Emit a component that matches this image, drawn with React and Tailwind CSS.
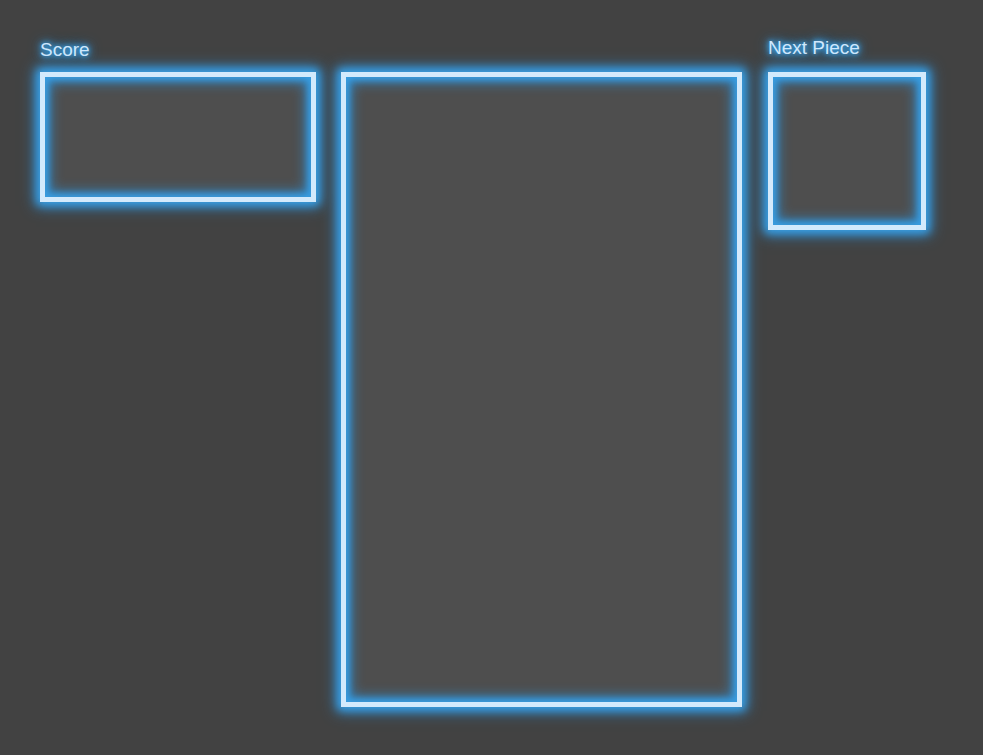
const panel =
  'border-[5px] border-[#d3eafc] bg-[#4e4e4e] shadow-[0_0_8px_3px_#3a9de0,0_0_14px_4px_#2f8fd4,inset_0_0_6px_3px_#3a9de0,inset_0_0_14px_4px_#2f8fd4]';

const labelCls =
  'text-[19px] leading-[22px] text-[#cfe8fd] [text-shadow:0_0_4px_#3a9de0,0_0_6px_#3a9de0,0_0_10px_#3a9de0,0_0_14px_#2f8fd4] mb-[12px]';

export default function App() {
  return (
    <div className="min-h-[755px] w-full bg-[#424242] font-['Liberation_Sans',Arial,sans-serif]">
      <div className="flex items-start pl-[40px] pt-[38px]">
        <div className="flex flex-col">
          <div className={`${labelCls} mt-[1px] !mb-[11px]`}>Score</div>
          <div className={`${panel} w-[276px] h-[130px]`} />
        </div>

        <div className={`${panel} ml-[25px] mt-[34px] w-[401px] h-[635px]`} />

        <div className="ml-[26px] flex flex-col -mt-[1px]">
          <div className={labelCls}>Next Piece</div>
          <div className={`${panel} mt-[1px] w-[158px] h-[158px]`} />
        </div>
      </div>
    </div>
  );
}
